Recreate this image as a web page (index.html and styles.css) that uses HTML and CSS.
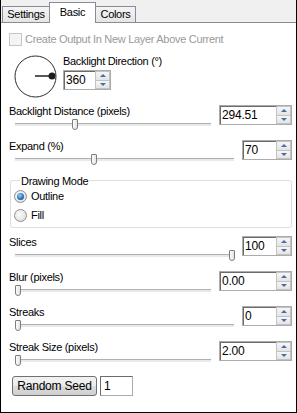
FILE: index.html
```html
<!DOCTYPE html>
<html lang="en">
<head>
    <meta charset="UTF-8">
    <meta name="viewport" content="width=device-width, initial-scale=1.0">
    <title>Backlight</title>
    <link rel="stylesheet" href="styles.css">
</head>
<body>
    <div class="window">
        <div class="tabs">
            <div class="tab tab-settings">Settings</div>
            <div class="tab tab-basic active">Basic</div>
            <div class="tab tab-colors">Colors</div>
        </div>
        <div class="panel">
            <div class="check-row">
                <span class="checkbox"></span>
                <span class="check-label">Create Output In New Layer Above Current</span>
            </div>

            <div class="direction">
                <svg class="dial" width="43" height="43" viewBox="0 0 43 43">
                    <circle cx="21.5" cy="21.5" r="20.5" fill="none" stroke="#2b2b2b" stroke-width="1"/>
                    <line x1="21" y1="21" x2="37" y2="21" stroke="#585858" stroke-width="2"/>
                    <circle cx="38" cy="21" r="3.5" fill="#1e1e1e"/>
                </svg>
                <div class="direction-side">
                    <div class="label">Backlight Direction (°)</div>
                    <div class="spin dir">
                        <div class="spin-field">360</div>
                        <div class="spin-btns">
                            <div class="spin-btn"><span class="arrow-up"></span></div>
                            <div class="spin-btn"><span class="arrow-down"></span></div>
                        </div>
                    </div>
                </div>
            </div>

            <div class="field">
                <div class="field-main">
                    <div class="label">Backlight Distance (pixels)</div>
                    <div class="track"><span class="thumb" style="left: 57px"></span></div>
                </div>
                <div class="spin wide">
                    <div class="spin-field">294.51</div>
                    <div class="spin-btns">
                        <div class="spin-btn"><span class="arrow-up"></span></div>
                        <div class="spin-btn"><span class="arrow-down"></span></div>
                    </div>
                </div>
            </div>

            <div class="field">
                <div class="field-main">
                    <div class="label">Expand (%)</div>
                    <div class="track"><span class="thumb" style="left: 76px"></span></div>
                </div>
                <div class="spin narrow">
                    <div class="spin-field">70</div>
                    <div class="spin-btns">
                        <div class="spin-btn"><span class="arrow-up"></span></div>
                        <div class="spin-btn"><span class="arrow-down"></span></div>
                    </div>
                </div>
            </div>

            <div class="group">
                <div class="group-title">Drawing Mode</div>
                <div class="radio-row">
                    <span class="radio checked"><span class="dot"></span></span>
                    <span>Outline</span>
                </div>
                <div class="radio-row">
                    <span class="radio"></span>
                    <span>Fill</span>
                </div>
            </div>

            <div class="field after-group">
                <div class="field-main">
                    <div class="label">Slices</div>
                    <div class="track"><span class="thumb" style="left: 214px"></span></div>
                </div>
                <div class="spin narrow">
                    <div class="spin-field">100</div>
                    <div class="spin-btns">
                        <div class="spin-btn"><span class="arrow-up"></span></div>
                        <div class="spin-btn"><span class="arrow-down"></span></div>
                    </div>
                </div>
            </div>

            <div class="field">
                <div class="field-main">
                    <div class="label">Blur (pixels)</div>
                    <div class="track"><span class="thumb" style="left: 0px"></span></div>
                </div>
                <div class="spin wide">
                    <div class="spin-field">0.00</div>
                    <div class="spin-btns">
                        <div class="spin-btn"><span class="arrow-up"></span></div>
                        <div class="spin-btn"><span class="arrow-down"></span></div>
                    </div>
                </div>
            </div>

            <div class="field">
                <div class="field-main">
                    <div class="label">Streaks</div>
                    <div class="track"><span class="thumb" style="left: 0px"></span></div>
                </div>
                <div class="spin narrow">
                    <div class="spin-field">0</div>
                    <div class="spin-btns">
                        <div class="spin-btn"><span class="arrow-up"></span></div>
                        <div class="spin-btn"><span class="arrow-down"></span></div>
                    </div>
                </div>
            </div>

            <div class="field">
                <div class="field-main">
                    <div class="label">Streak Size (pixels)</div>
                    <div class="track"><span class="thumb" style="left: 0px"></span></div>
                </div>
                <div class="spin wide">
                    <div class="spin-field">2.00</div>
                    <div class="spin-btns">
                        <div class="spin-btn"><span class="arrow-up"></span></div>
                        <div class="spin-btn"><span class="arrow-down"></span></div>
                    </div>
                </div>
            </div>

            <div class="seed-row">
                <button class="seed-btn">Random Seed</button>
                <div class="seed-box">1</div>
            </div>
        </div>
    </div>
</body>
</html>
```

FILE: styles.css
```css
* {
    margin: 0;
    padding: 0;
    box-sizing: border-box;
}

body {
    font-family: 'Liberation Sans', Arial, sans-serif;
    font-size: 11px;
    letter-spacing: -0.3px;
    color: #000;
    background: #fff;
}

.window {
    width: 297px;
    height: 413px;
    border: 1px solid #000;
    border-top: none;
    background: #f0f0f0;
    display: flex;
    flex-direction: column;
}

/* tab strip */
.tabs {
    height: 22px;
    display: flex;
    align-items: flex-end;
    padding-left: 1px;
}

.tab {
    height: 16px;
    padding-top: 1px;
    line-height: 13px;
    text-align: center;
    border: 1px solid #898c95;
    border-bottom: none;
    background: linear-gradient(#f4f4f4, #e5e5e5);
    margin-right: -1px;
}

.tab-settings { width: 48px; }
.tab-basic { width: 47px; }
.tab-colors { width: 41px; }

.tab.active {
    height: 21px;
    padding-top: 3px;
    background: #fff;
    margin-bottom: -1px;
    position: relative;
    z-index: 1;
}

.panel {
    flex: 1;
    background: #fff;
    border-top: 1px solid #898c95;
    padding: 10px 4px 0 8px;
}

.label {
    line-height: 13px;
    white-space: nowrap;
}

/* checkbox */
.check-row {
    display: flex;
    align-items: center;
    height: 13px;
    gap: 3px;
}

.checkbox {
    width: 13px;
    height: 13px;
    border: 1px solid #c6c6c6;
    background: #f4f4f4;
}

.check-label {
    color: #9a9a9a;
    line-height: 13px;
}

/* direction dial */
.direction {
    display: flex;
    margin-top: 9px;
    gap: 6px;
}

.dial {
    margin-left: 5px;
    display: block;
}

.direction-side .spin {
    margin-top: 2px;
}

/* spin box */
.spin {
    display: flex;
    height: 20px;
    border: 1px solid #acacac;
    flex-shrink: 0;
}

.spin.dir { width: 48px; }
.spin.wide { width: 73px; }
.spin.narrow { width: 50px; }

.spin-field {
    flex: 1;
    background: #fff;
    border-top: 1px solid #6b6b6b;
    border-left: 1px solid #6b6b6b;
    font-size: 12px;
    letter-spacing: -0.2px;
    line-height: 16px;
    padding-left: 1px;
}

.spin-btns {
    width: 15px;
    display: flex;
    flex-direction: column;
}

.spin-btn {
    flex: 1;
    display: flex;
    align-items: center;
    justify-content: center;
    border: 1px solid #c2c2c2;
    background: linear-gradient(#f6f6f6, #e4e4e4);
}

.spin-btn + .spin-btn {
    border-top: none;
}

.arrow-up {
    width: 0;
    height: 0;
    border-left: 3px solid transparent;
    border-right: 3px solid transparent;
    border-bottom: 3px solid #4a6aa8;
}

.arrow-down {
    width: 0;
    height: 0;
    border-left: 3px solid transparent;
    border-right: 3px solid transparent;
    border-top: 3px solid #4a6aa8;
}

/* slider rows */
.field {
    display: flex;
    gap: 8px;
    height: 35px;
    margin-top: 7px;
}

.field + .field {
    margin-top: 0;
}

.field-main {
    flex: 1;
}

.track {
    position: relative;
    margin: 5px 0 0 6px;
    height: 3px;
    border-top: 1px solid #b0b0b0;
    background: #e7eaea;
}

.thumb {
    position: absolute;
    top: -5px;
    left: 0;
    width: 6px;
    height: 11px;
    border: 1px solid #7d7d7d;
    border-radius: 1px 1px 3px 3px;
    background: linear-gradient(90deg, #fdfdfd, #e3e3e3);
}

/* group box */
.group {
    margin-top: 5px;
    margin-left: 1px;
    border: 1px solid #d5dfe5;
    border-radius: 3px;
    padding: 0 0 5px 3px;
}

.group-title {
    display: block;
    width: fit-content;
    height: 13px;
    margin: -6px 0 0 6px;
    padding: 0 1px;
    background: #fff;
    line-height: 13px;
}

.radio-row {
    display: flex;
    align-items: center;
    gap: 4px;
    height: 13px;
    line-height: 13px;
    margin-top: 2px;
}

.radio-row + .radio-row {
    margin-top: 6px;
}

.radio {
    width: 13px;
    height: 13px;
    border-radius: 50%;
    border: 1px solid #8e8f8f;
    background: radial-gradient(circle at 40% 40%, #fbfbfb, #d8d8d8);
    display: flex;
    align-items: center;
    justify-content: center;
}

.dot {
    width: 7px;
    height: 7px;
    border-radius: 50%;
    background: radial-gradient(circle at 40% 35%, #8fd3fb, #1c5fa6 70%);
}

.field.after-group {
    margin-top: 8px;
}

/* seed */
.seed-row {
    display: flex;
    gap: 3px;
    margin-left: 3px;
}

.seed-btn {
    width: 85px;
    height: 20px;
    border: 1px solid #707070;
    border-radius: 3px;
    background: linear-gradient(#f2f2f2 0%, #ebebeb 50%, #dddddd 51%, #cfcfcf 100%);
    font-family: inherit;
    font-size: 12px;
    letter-spacing: -0.2px;
    color: #000;
}

.seed-box {
    width: 33px;
    height: 20px;
    border: 1px solid #acacac;
    border-top-color: #6b6b6b;
    border-left-color: #6b6b6b;
    font-size: 12px;
    line-height: 18px;
    padding-left: 3px;
}
```
